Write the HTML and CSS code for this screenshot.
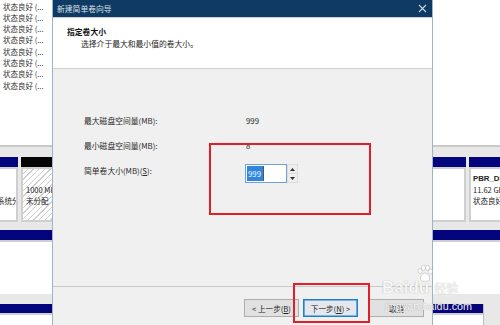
FILE: index.html
```html
<!DOCTYPE html>
<html lang="zh-CN">
<head>
<meta charset="utf-8">
<title>新建简单卷向导</title>
<link rel="stylesheet" href="styles.css">
</head>
<body>
<div class="screen">
  <div class="mgmt">
    <div class="vol-list">
      <div class="vol-row">状态良好 (...</div>
      <div class="vol-row">状态良好 (...</div>
      <div class="vol-row">状态良好 (...</div>
      <div class="vol-row">状态良好 (...</div>
      <div class="vol-row">状态良好 (...</div>
      <div class="vol-row">状态良好 (...</div>
      <div class="vol-row">状态良好 (...</div>
      <div class="vol-row">状态良好 (...</div>
    </div>
    <div class="disk disk-a">
      <div class="part part-sys"><div class="pbar"></div><div class="pbody pbody-sys"><span class="pline">&nbsp;</span><span class="pline">&nbsp;</span><span class="pline shift">系统分区</span></div></div>
      <div class="part part-free"><div class="pbar pbar-black"></div><div class="pbody hatch pbody-free"><span class="pline">1000 MB</span><span class="pline">未分配</span></div></div>
      <div class="part part-mid"><div class="pbar"></div><div class="pbody"></div></div>
      <div class="part part-pbr"><div class="pbar"></div><div class="pbody pbody-pbr"><b class="pline">PBR_DRIVE</b><span class="pline">11.62 GB NTFS</span><span class="pline">状态良好 (主分区)</span></div></div>
    </div>
    <div class="disk disk-b">
      <div class="part part-full"><div class="pbar"></div><div class="pbody pbody-tall"></div></div>
    </div>
    <div class="disk disk-c">
      <div class="part part-last"><div class="pbar pbar-thin"></div><div class="pbody pbody-tall"></div></div>
    </div>
  </div>

  <div class="dialog">
    <div class="titlebar">
      <span class="title">新建简单卷向导</span>
      <svg class="close" width="9" height="9" viewBox="0 0 9 9"><path d="M1 1 L8 8 M8 1 L1 8" stroke="#c9d3de" stroke-width="1.1" fill="none"/></svg>
    </div>
    <div class="header">
      <div class="h-title">指定卷大小</div>
      <div class="h-sub">选择介于最大和最小值的卷大小。</div>
    </div>
    <div class="body">
      <div class="form">
        <div class="lbl">最大磁盘空间量(MB):</div>
        <div class="val">999</div>
        <div class="lbl">最小磁盘空间量(MB):</div>
        <div class="val">8</div>
        <div class="lbl lbl-input">简单卷大小(MB)(<u>S</u>):</div>
        <div class="spin">
          <div class="spin-input"><span class="sel">999</span></div>
          <div class="spin-btns">
            <div class="sb"><svg width="5" height="3" viewBox="0 0 5 3"><path d="M0 3 L2.5 0 L5 3Z" fill="#333"/></svg></div>
            <div class="sb"><svg width="5" height="3" viewBox="0 0 5 3"><path d="M0 0 L2.5 3 L5 0Z" fill="#333"/></svg></div>
          </div>
        </div>
      </div>
    </div>
    <div class="footer">
      <div class="btn btn-back">&lt; 上一步(<u>B</u>)</div>
      <div class="btn btn-next">下一步(<u>N</u>) &gt;</div>
      <div class="btn btn-cancel">取消</div>
    </div>
  </div>

  <div class="mark mark-size"></div>
  <div class="mark mark-next"></div>

  <div class="watermark">
    <div class="wm-logo">
      <span class="wm-bai">Bai</span><span class="wm-du">du</span><span class="wm-jy">经验</span>
      <svg class="wm-paw" width="16" height="18" viewBox="0 0 16 18">
        <g fill="rgba(255,255,255,0.9)" stroke="rgba(120,120,120,0.45)" stroke-width="0.6">
          <ellipse cx="3" cy="6" rx="2" ry="2.6"/>
          <ellipse cx="6.5" cy="2.8" rx="2" ry="2.6"/>
          <ellipse cx="10.5" cy="2.8" rx="2" ry="2.6"/>
          <ellipse cx="13.5" cy="6.5" rx="2" ry="2.6"/>
          <path d="M8 8 C5 8 3 12 3.5 14.5 C4 17 7 16 8 16 C9 16 12 17 12.5 14.5 C13 12 11 8 8 8Z"/>
        </g>
      </svg>
    </div>
    <div class="wm-url">jingyan.baidu.com</div>
  </div>
</div>
</body>
</html>
```

FILE: styles.css
```css
html, body {
  margin: 0;
  padding: 0;
}

body {
  width: 500px;
  height: 325px;
  overflow: hidden;
  font-family: "Noto Sans CJK SC", "Liberation Sans", sans-serif;
  font-size: 7.8px;
  color: #222;
}

.screen {
  position: relative;
  width: 500px;
  height: 325px;
  overflow: hidden;
  background: #e8e8e8;
}

/* ---------- background: disk management ---------- */
.mgmt {
  display: flex;
  flex-direction: column;
}

.vol-list {
  height: 147px;
  flex-shrink: 0;
  box-sizing: border-box;
  background: #fff;
  border-bottom: 2px solid #c9c9c9;
  padding: 0.5px 0 0 3px;
  overflow: hidden;
}

.vol-row {
  font-size: 7.5px;
  line-height: 11.3px;
  height: 11.3px;
  color: #333;
  white-space: nowrap;
}

.disk {
  display: flex;
  align-items: flex-start;
  gap: 3px;
  overflow: hidden;
  width: 500px;
  flex-shrink: 0;
  box-sizing: border-box;
}

.disk-a { height: 75px; padding-top: 10px; }
.disk-b { height: 72px; padding-top: 8px; }
.disk-c { height: 40px; padding-top: 10px; }

.part {
  flex-shrink: 0;
  display: flex;
  flex-direction: column;
}

.part-sys { width: 18px; }
.part-free { width: 150px; }
.part-mid { width: 292px; }
.part-pbr { width: 80px; }
.part-full { width: 500px; }
.part-last { width: 483px; border-right: 1px solid #bdbdbd; }

.pbar {
  height: 10px;
  flex-shrink: 0;
  background: #04047c;
}

.pbar-black { background: #050505; }
.pbar-thin { height: 9px; }

.pbody {
  height: 55px;
  flex-shrink: 0;
  box-sizing: border-box;
  background: #fff;
  border: 2px solid #cfcfcf;
  display: flex;
  flex-direction: column;
  overflow: hidden;
  white-space: nowrap;
  padding: 3.5px 0 0 3px;
}

.pbody-tall {
  height: 54px;
  border-width: 2px 0 0 0;
}

.pbody-sys {
  padding-left: 0;
  border-left: 0;
}

.pbody-free {
  padding-top: 15px;
  padding-left: 3px;
}

.pbody-pbr {
  padding-left: 2px;
}

.pline {
  font-size: 7.5px;
  line-height: 11px;
  height: 11px;
  color: #222;
}

b.pline {
  font-family: "Liberation Sans", "Noto Sans CJK SC", sans-serif;
  font-weight: 700;
  font-size: 7.8px;
}

.shift {
  margin-left: -3px;
}

.hatch {
  background: repeating-linear-gradient(135deg, #ffffff 0 3px, #cfcfcf 3px 4px);
}

/* ---------- dialog ---------- */
.dialog {
  position: absolute;
  left: 52px;
  top: 0;
  width: 381px;
  height: 340px;
  box-sizing: border-box;
  border-left: 1.5px solid #9fb3c8;
  border-right: 1.5px solid #9fb3c8;
  background: #f0f0f0;
  display: flex;
  flex-direction: column;
}

.titlebar {
  height: 17px;
  flex-shrink: 0;
  background: #0f3a63;
  display: flex;
  align-items: center;
  justify-content: space-between;
  padding: 0 5px 0 4px;
}

.title {
  color: #d9e0e8;
  font-size: 7.8px;
  line-height: 11px;
}

.close {
  display: block;
  margin-top: -1px;
}

.header {
  height: 52px;
  flex-shrink: 0;
  box-sizing: border-box;
  background: #fff;
  border-top: 1px solid #c3cdd8;
  border-bottom: 1px solid #d2d2d2;
  padding: 7.5px 0 0 14px;
}

.h-title {
  font-weight: 700;
  line-height: 11px;
  color: #111;
}

.h-sub {
  line-height: 11px;
  margin-top: 1px;
  padding-left: 14px;
  color: #222;
}

.body {
  height: 217px;
  flex-shrink: 0;
  box-sizing: border-box;
  padding: 46px 0 0 31px;
}

.form {
  display: grid;
  grid-template-columns: 161px auto;
  row-gap: 12.5px;
  align-items: start;
}

.lbl, .val {
  line-height: 12px;
  color: #2a2a2a;
  white-space: nowrap;
}

.val {
  padding-left: 1px;
}

.lbl-input {
  padding-top: 1px;
}

.spin {
  display: flex;
  height: 19px;
}

.spin-input {
  width: 42px;
  height: 19px;
  box-sizing: border-box;
  background: #fff;
  border: 1px solid #6fa2d8;
  padding: 1px 0 0 1px;
  display: flex;
}

.sel {
  background: #2f86de;
  color: #f2f6fb;
  line-height: 15px;
  height: 15px;
  padding: 0 2px 0 1px;
  border-right: 1.5px solid #555;
}

.spin-btns {
  width: 11px;
  height: 19px;
  box-sizing: border-box;
  background: #dedede;
  padding: 1px;
  display: flex;
  flex-direction: column;
  gap: 1px;
}

.sb {
  flex: 1;
  background: #eeeeee;
  display: flex;
  align-items: center;
  justify-content: center;
}

.sb svg { display: block; }

.footer {
  border-top: 1px solid #c8c8c8;
  padding: 12px 8px 0 0;
  display: flex;
  justify-content: flex-end;
}

.btn {
  width: 55px;
  height: 18px;
  box-sizing: border-box;
  background: #e1e1e1;
  border: 1px solid #adadad;
  display: flex;
  align-items: center;
  justify-content: center;
  font-size: 7.6px;
  color: #222;
  white-space: nowrap;
}

.btn-back { margin-right: 4px; }

.btn-next {
  margin-right: 11px;
  border-color: #1a7fd8;
  box-shadow: inset 0 0 0 0.6px #1a7fd8;
  background: #e4e8ec;
}

/* ---------- annotations ---------- */
.mark {
  position: absolute;
  box-sizing: border-box;
  border: 2px solid #e41e26;
}

.mark-size {
  left: 209px;
  top: 143px;
  width: 162px;
  height: 72px;
}

.mark-next {
  left: 293px;
  top: 283px;
  width: 77px;
  height: 40px;
}

/* ---------- watermark ---------- */
.watermark {
  position: absolute;
  left: 382px;
  top: 262px;
  width: 110px;
  color: rgba(255, 255, 255, 0.92);
  text-shadow: 0 0 1px rgba(90, 90, 90, 0.55);
}

.wm-logo {
  position: relative;
  display: flex;
  align-items: baseline;
  padding-top: 18px;
}

.wm-bai, .wm-du {
  font-family: "Liberation Sans", sans-serif;
  font-weight: 700;
  font-size: 17px;
  line-height: 16px;
}

.wm-jy {
  font-family: "Noto Sans CJK SC", sans-serif;
  font-size: 12px;
  line-height: 14px;
  margin-left: 5px;
}

.wm-paw {
  position: absolute;
  left: 35px;
  top: 3px;
}

.wm-url {
  font-family: "Liberation Sans", sans-serif;
  font-size: 10.8px;
  line-height: 12px;
  margin-top: 4px;
  padding-left: 3px;
}
```
